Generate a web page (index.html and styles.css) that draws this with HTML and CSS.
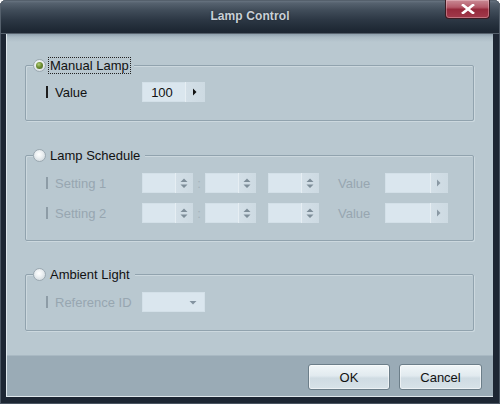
FILE: index.html
```html
<!DOCTYPE html>
<html>
<head>
<meta charset="utf-8">
<link rel="stylesheet" href="styles.css">
</head>
<body>
<div class="window">
  <div class="titlebar">
    <span class="title">Lamp Control</span>
    <div class="close">
      <svg width="14" height="10" viewBox="0 0 14 10"><path d="M2 1 L12 9 M12 1 L2 9" stroke="#fff" stroke-width="2.6" stroke-linecap="square"/></svg>
    </div>
  </div>
  <div class="client">
    <div class="main">
      <div class="group g1">
        <div class="legend">
          <span class="radio checked"></span>
          <span class="legend-text focus">Manual Lamp</span>
        </div>
        <div class="row">
          <span class="label"><i class="bar"></i>Value</span>
          <div class="field f-value">
            <span class="field-text">100</span>
            <span class="field-btn"><svg width="20" height="20" viewBox="0 0 20 20"><path d="M8 6.5 L11.5 10 L8 13.5 Z" fill="#111"/></svg></span>
          </div>
        </div>
      </div>

      <div class="group g2">
        <div class="legend">
          <span class="radio"></span>
          <span class="legend-text">Lamp Schedule</span>
        </div>
        <div class="row">
          <span class="label dis"><i class="bar"></i>Setting 1</span>
          <div class="field spin"><span class="field-text"></span><span class="spin-btn"><svg width="18" height="20" viewBox="0 0 18 20"><path d="M5.5 9 L9 5.5 L12.5 9 Z M5.5 11.5 L9 15 L12.5 11.5 Z" fill="#7e8e99"/></svg></span></div>
          <span class="colon">:</span>
          <div class="field spin"><span class="field-text"></span><span class="spin-btn"><svg width="18" height="20" viewBox="0 0 18 20"><path d="M5.5 9 L9 5.5 L12.5 9 Z M5.5 11.5 L9 15 L12.5 11.5 Z" fill="#7e8e99"/></svg></span></div>
          <div class="field spin s3"><span class="field-text"></span><span class="spin-btn"><svg width="18" height="20" viewBox="0 0 18 20"><path d="M5.5 9 L9 5.5 L12.5 9 Z M5.5 11.5 L9 15 L12.5 11.5 Z" fill="#7e8e99"/></svg></span></div>
          <span class="vlabel">Value</span>
          <div class="field f-value"><span class="field-text"></span><span class="field-btn dbtn"><svg width="18" height="20" viewBox="0 0 18 20"><path d="M7 6.5 L10.5 10 L7 13.5 Z" fill="#8a99a4"/></svg></span></div>
        </div>
        <div class="row r2">
          <span class="label dis"><i class="bar"></i>Setting 2</span>
          <div class="field spin"><span class="field-text"></span><span class="spin-btn"><svg width="18" height="20" viewBox="0 0 18 20"><path d="M5.5 9 L9 5.5 L12.5 9 Z M5.5 11.5 L9 15 L12.5 11.5 Z" fill="#7e8e99"/></svg></span></div>
          <span class="colon">:</span>
          <div class="field spin"><span class="field-text"></span><span class="spin-btn"><svg width="18" height="20" viewBox="0 0 18 20"><path d="M5.5 9 L9 5.5 L12.5 9 Z M5.5 11.5 L9 15 L12.5 11.5 Z" fill="#7e8e99"/></svg></span></div>
          <div class="field spin s3"><span class="field-text"></span><span class="spin-btn"><svg width="18" height="20" viewBox="0 0 18 20"><path d="M5.5 9 L9 5.5 L12.5 9 Z M5.5 11.5 L9 15 L12.5 11.5 Z" fill="#7e8e99"/></svg></span></div>
          <span class="vlabel">Value</span>
          <div class="field f-value"><span class="field-text"></span><span class="field-btn dbtn"><svg width="18" height="20" viewBox="0 0 18 20"><path d="M7 6.5 L10.5 10 L7 13.5 Z" fill="#8a99a4"/></svg></span></div>
        </div>
      </div>

      <div class="group g3">
        <div class="legend">
          <span class="radio"></span>
          <span class="legend-text">Ambient Light</span>
        </div>
        <div class="row">
          <span class="label dis"><i class="bar"></i>Reference ID</span>
          <div class="field f-combo">
            <span class="field-text"></span>
            <svg class="combo-arrow" width="20" height="20" viewBox="0 0 20 20"><path d="M6.5 9 L13.5 9 L10 12.5 Z" fill="#8393a0"/></svg>
          </div>
        </div>
      </div>
    </div>
    <div class="footer">
      <div class="btn ok">OK</div>
      <div class="btn cancel">Cancel</div>
    </div>
  </div>
</div>
</body>
</html>
```

FILE: styles.css
```css
* { box-sizing: border-box; }
html, body { margin: 0; padding: 0; }
body {
  width: 500px;
  height: 404px;
  overflow: hidden;
  font-family: "Liberation Sans", Arial, sans-serif;
  font-size: 13px;
  color: #111;
}
.window {
  width: 500px;
  height: 404px;
  display: flex;
  flex-direction: column;
  background: #1d2633;
  border-radius: 6px 6px 0 0;
  padding: 0 7px 7px 6px;
  position: relative;
  box-shadow: inset 0 0 0 1px #4a5562;
}
.titlebar {
  height: 34px;
  margin: 0 -7px 0 -6px;
  border-radius: 6px 6px 0 0;
  background: linear-gradient(#707c89 0, #56626f 3px, #414d5a 10px, #2c3744 20px, #1e2834 30px, #1c2531 34px);
  box-shadow: inset 0 0 0 1px #55606c;
  display: flex;
  justify-content: center;
  align-items: flex-start;
  padding-top: 9px;
  flex: none;
}
.title {
  font-size: 12px;
  font-weight: bold;
  color: #c9d0d7;
  letter-spacing: 0.1px;
  text-shadow: 0 0 2px rgba(0,0,0,.4);
}
.close {
  position: absolute;
  left: 445px;
  top: 0;
  width: 45px;
  height: 19px;
  border: 1px solid #3a1b22;
  border-top: none;
  border-radius: 0 0 4px 4px;
  background: linear-gradient(#c98a95 0, #b45a69 40%, #952a3c 52%, #a13a4b 100%);
  box-shadow: inset 0 0 0 1px rgba(255,220,225,.35);
  display: flex;
  justify-content: center;
  align-items: center;
}
.client {
  flex: 1;
  display: flex;
  flex-direction: column;
  border-left: 1px solid #dfe7ec;
  border-bottom: 1px solid #dfe7ec;
  background: #b9c8d0;
}
.main {
  flex: 1;
  padding: 31px 19px 0 18px;
  background: linear-gradient(#8e9fac 0, #a9b9c3 3px, #b9c8d0 8px, #b9c8d0 100%);
}
.group {
  border: 1px solid #91a3ae;
  box-shadow: 1px 1px 0 #ccd8de, inset 1px 1px 0 #ccd8de;
  border-radius: 2px;
}
.g1 { padding-bottom: 18px; }
.g2 { margin-top: 34px; padding-bottom: 17px; }
.g3 { margin-top: 33px; padding-bottom: 18px; }
.legend {
  display: flex;
  align-items: center;
  height: 16px;
  margin: -9px 0 0 7px;
  width: fit-content;
  background: #b9c8d0;
  padding-right: 3px;
}
.radio {
  width: 13px;
  height: 13px;
  border-radius: 50%;
  border: 1px solid #9ba8b1;
  background: radial-gradient(circle at 45% 40%, #ffffff 0, #eef2f4 35%, #c7d0d6 100%);
  margin-right: 2px;
  display: flex;
  align-items: center;
  justify-content: center;
}
.radio.checked::after {
  content: "";
  width: 7px;
  height: 7px;
  border-radius: 50%;
  background: radial-gradient(circle at 40% 35%, #b4cf7a 0, #6e8f33 45%, #3f5a18 100%);
}
.legend-text {
  padding: 0 1px;
  line-height: 15px;
  border: 1px solid transparent;
}
.legend-text.focus { border: 1px dotted #222; }
.row {
  display: flex;
  align-items: center;
  height: 20px;
  margin: 9px 0 0 20px;
}
.g2 .row, .g3 .row { margin-top: 10px; }
.label {
  width: 96px;
  display: flex;
  align-items: center;
  color: #111;
}
.bar {
  width: 2px;
  height: 12px;
  background: #1e1e1e;
  margin-right: 7px;
}
.label.dis, .vlabel { color: #97a6b0; }
.label.dis .bar { background: #8d9ca6; }
.field {
  display: flex;
  height: 20px;
  background: #dae6ee;
  box-shadow: inset 0 0 0 1px #d3e0e8;
}
.field-text {
  flex: 1;
  display: flex;
  align-items: center;
  justify-content: center;
  padding-right: 3px;
}
.field-btn, .spin-btn {
  width: 20px;
  display: flex;
  background: linear-gradient(90deg, #e6eef3 0, #e6eef3 1px, #d3dfe7 1px, #cddae2 100%);
}
.spin-btn { width: 18px; }
.f-value { width: 63px; }
.dbtn { width: 18px; }
.spin { width: 51px; }
.colon {
  width: 12px;
  text-align: center;
  color: #a3b2bb;
}
.s3 { margin-left: 12px; }
.vlabel { margin-left: 19px; width: 47px; }
.f-combo {
  width: 63px;
  align-items: center;
}
.combo-arrow { margin-right: 2px; }
.footer {
  height: 41px;
  flex: none;
  background: #9aabb6;
  border-top: 1px solid #a9b9c3;
  display: flex;
  justify-content: flex-end;
  gap: 9px;
  padding: 8px 11px 0 0;
}
.btn {
  height: 26px;
  border: 1px solid #6c7e89;
  border-radius: 3px;
  background: linear-gradient(#f1f6f8 0, #e1eaef 45%, #cfdbe2 55%, #d7e2e8 100%);
  box-shadow: inset 0 0 0 1px rgba(255,255,255,.55);
  display: flex;
  align-items: center;
  justify-content: center;
  color: #111;
}
.ok { width: 82px; }
.cancel { width: 83px; }
```
